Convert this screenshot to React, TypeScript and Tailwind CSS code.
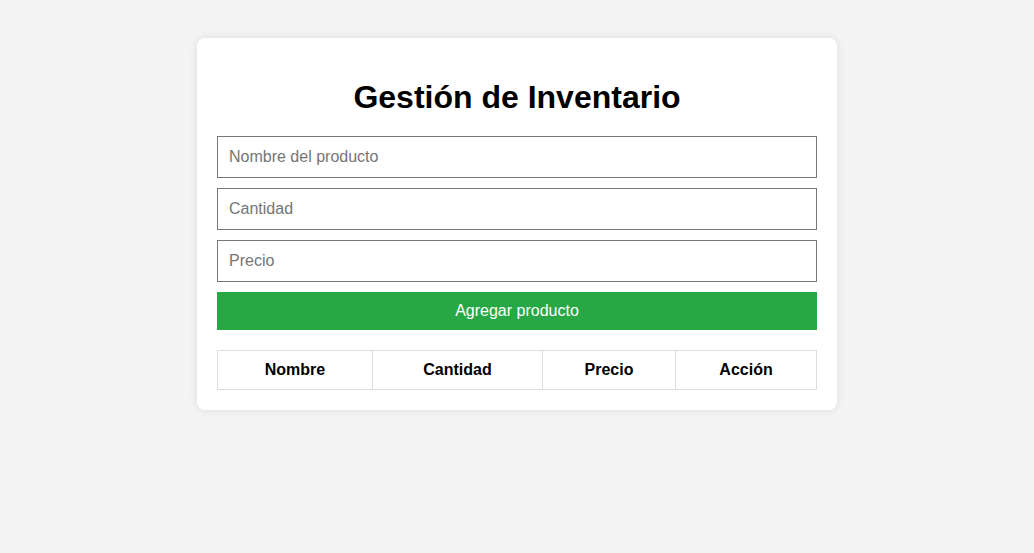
export default function App() {
  return (
    <div className="min-h-[553px] w-full bg-[#f4f4f4] pt-[38px] font-['Liberation_Sans',Arial,sans-serif]">
      <div className="mx-auto w-[640px] rounded-[8px] bg-white px-[20px] pb-[20px] pt-[41px] shadow-[0_0_10px_rgba(0,0,0,0.1)]">
        <h1 className="mb-[20px] h-[37px] text-center text-[32px] font-bold leading-[37px] text-black">
          Gestión de Inventario
        </h1>
        <div className="flex flex-col gap-[10px]">
          <input
            placeholder="Nombre del producto"
            className="h-[42px] w-full border border-[#767676] px-[11px] text-[16px] text-black placeholder:text-[#757575] outline-none"
          />
          <input
            placeholder="Cantidad"
            className="h-[42px] w-full border border-[#767676] px-[11px] text-[16px] text-black placeholder:text-[#757575] outline-none"
          />
          <input
            placeholder="Precio"
            className="h-[42px] w-full border border-[#767676] px-[11px] text-[16px] text-black placeholder:text-[#757575] outline-none"
          />
          <button className="h-[38px] w-full bg-[#28a745] text-[16px] text-white">
            Agregar producto
          </button>
        </div>
        <table className="mt-[20px] w-[600px] border-collapse">
          <thead>
            <tr className="h-[39px]">
              <th className="w-[155px] border border-[#dddddd] text-[16px] font-bold leading-[18px] text-black">Nombre</th>
              <th className="w-[170px] border border-[#dddddd] text-[16px] font-bold leading-[18px] text-black">Cantidad</th>
              <th className="w-[133px] border border-[#dddddd] text-[16px] font-bold leading-[18px] text-black">Precio</th>
              <th className="border border-[#dddddd] text-[16px] font-bold leading-[18px] text-black">Acción</th>
            </tr>
          </thead>
        </table>
      </div>
    </div>
  );
}
